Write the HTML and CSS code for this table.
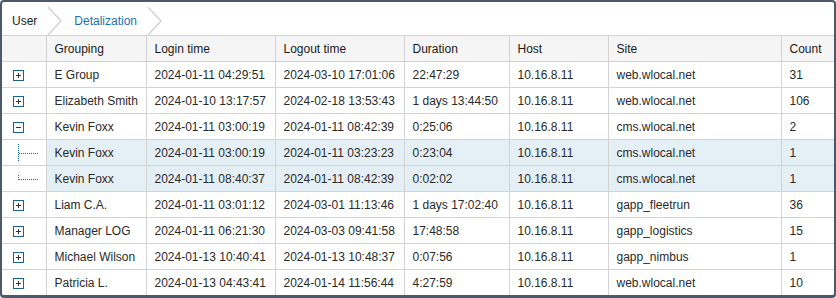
FILE: index.html
```html
<!DOCTYPE html>
<html>
<head>
<meta charset="utf-8">
<link rel="stylesheet" href="styles.css">
</head>
<body>
<div class="frame">
  <div class="crumbs">
    <span class="crumb">User</span>
    <svg class="chev" width="16" height="28" viewBox="0 0 16 28"><polyline points="1,0 14,14 1,28" fill="none" stroke="#cfcfcf" stroke-width="1.3"/></svg>
    <span class="crumb active">Detalization</span>
    <svg class="chev" width="16" height="28" viewBox="0 0 16 28"><polyline points="1,0 14,14 1,28" fill="none" stroke="#cfcfcf" stroke-width="1.3"/></svg>
  </div>
  <table class="grid">
    <colgroup>
      <col class="c0"><col class="c1"><col class="c2"><col class="c3"><col class="c4"><col class="c5"><col class="c6"><col class="c7">
    </colgroup>
    <thead>
      <tr><th></th><th>Grouping</th><th>Login time</th><th>Logout time</th><th>Duration</th><th>Host</th><th>Site</th><th>Count</th></tr>
    </thead>
    <tbody>
      <tr><td class="ic"><span class="box plus"></span></td><td>E Group</td><td>2024-01-11 04:29:51</td><td>2024-03-10 17:01:06</td><td>22:47:29</td><td>10.16.8.11</td><td>web.wlocal.net</td><td>31</td></tr>
      <tr><td class="ic"><span class="box plus"></span></td><td>Elizabeth Smith</td><td>2024-01-10 13:17:57</td><td>2024-02-18 13:53:43</td><td>1 days 13:44:50</td><td>10.16.8.11</td><td>web.wlocal.net</td><td>106</td></tr>
      <tr><td class="ic"><span class="box minus"></span></td><td>Kevin Foxx</td><td>2024-01-11 03:00:19</td><td>2024-01-11 08:42:39</td><td>0:25:06</td><td>10.16.8.11</td><td>cms.wlocal.net</td><td>2</td></tr>
      <tr class="sub"><td class="ic"><span class="tree mid"></span></td><td>Kevin Foxx</td><td>2024-01-11 03:00:19</td><td>2024-01-11 03:23:23</td><td>0:23:04</td><td>10.16.8.11</td><td>cms.wlocal.net</td><td>1</td></tr>
      <tr class="sub"><td class="ic"><span class="tree last"></span></td><td>Kevin Foxx</td><td>2024-01-11 08:40:37</td><td>2024-01-11 08:42:39</td><td>0:02:02</td><td>10.16.8.11</td><td>cms.wlocal.net</td><td>1</td></tr>
      <tr><td class="ic"><span class="box plus"></span></td><td>Liam C.A.</td><td>2024-01-11 03:01:12</td><td>2024-03-01 11:13:46</td><td>1 days 17:02:40</td><td>10.16.8.11</td><td>gapp_fleetrun</td><td>36</td></tr>
      <tr><td class="ic"><span class="box plus"></span></td><td>Manager LOG</td><td>2024-01-11 06:21:30</td><td>2024-03-03 09:41:58</td><td>17:48:58</td><td>10.16.8.11</td><td>gapp_logistics</td><td>15</td></tr>
      <tr><td class="ic"><span class="box plus"></span></td><td>Michael Wilson</td><td>2024-01-13 10:40:41</td><td>2024-01-13 10:48:37</td><td>0:07:56</td><td>10.16.8.11</td><td>gapp_nimbus</td><td>1</td></tr>
      <tr><td class="ic"><span class="box plus"></span></td><td>Patricia L.</td><td>2024-01-13 04:43:41</td><td>2024-01-14 11:56:44</td><td>4:27:59</td><td>10.16.8.11</td><td>web.wlocal.net</td><td>10</td></tr>
    </tbody>
  </table>
</div>
</body>
</html>
```
FILE: styles.css
```css
html, body {
  margin: 0;
  padding: 0;
  background: #ffffff;
}
body {
  font-family: "Liberation Sans", Arial, sans-serif;
  font-size: 12px;
  color: #2a2a2a;
}
.frame {
  width: 836px;
  height: 298px;
  box-sizing: border-box;
  border: 2px solid #4c596b;
  border-bottom-width: 3px;
  border-radius: 4px;
  overflow: hidden;
  background: #fff;
}
.crumbs {
  height: 33px;
  display: flex;
  align-items: flex-end;
  box-sizing: border-box;
  padding-left: 10px;
}
.crumb {
  height: 28px;
  line-height: 28px;
  font-size: 12px;
  color: #222;
}
.crumb.active {
  color: #1f6fae;
}
.chev {
  display: block;
  margin: 0 11px 0 10px;
}
.grid {
  border-collapse: collapse;
  table-layout: fixed;
  width: 832px;
}
.c0 { width: 44px; }
.c1 { width: 100px; }
.c2 { width: 129px; }
.c3 { width: 129px; }
.c4 { width: 105px; }
.c5 { width: 99px; }
.c6 { width: 173px; }
.c7 { width: 53px; }
.grid th, .grid td {
  height: 25px;
  padding: 0 0 0 8px;
  border: 1px solid #d3d3d3;
  text-align: left;
  white-space: nowrap;
  overflow: hidden;
  font-size: 12px;
  color: #2a2a2a;
}
.grid tr > :first-child { border-left: none; }
.grid tr > :last-child { border-right: none; }
.grid th {
  font-weight: normal;
  background: #f5f5f5;
  color: #1a1a1a;
}
.grid tbody tr:last-child td { border-bottom: none; }
.grid tr.sub td { background: #e5eff6; }
.grid tr.sub td.ic { background: #fff; }
.grid td.ic {
  padding: 0 0 0 11px;
  position: relative;
}
.box {
  display: block;
  width: 9px;
  height: 9px;
  border: 1px solid #1c5f92;
  position: relative;
  margin-top: 2px;
}
.box::before {
  content: "";
  position: absolute;
  left: 2px;
  top: 4px;
  width: 5px;
  height: 1px;
  background: #333;
}
.box.plus::after {
  content: "";
  position: absolute;
  left: 4px;
  top: 2px;
  width: 1px;
  height: 5px;
  background: #333;
}
.tree {
  position: absolute;
  left: 16px;
  top: 0;
  width: 20px;
  height: 100%;
}
.tree::before {
  content: "";
  position: absolute;
  left: 0;
  width: 0;
  border-left: 1px dotted #1c6fae;
}
.tree::after {
  content: "";
  position: absolute;
  left: 1px;
  top: 13px;
  width: 19px;
  height: 0;
  border-top: 1px dotted #1c6fae;
}
.tree.mid::before { top: 4px; height: 17px; }
.tree.last::before { top: 9px; height: 5px; }
```
